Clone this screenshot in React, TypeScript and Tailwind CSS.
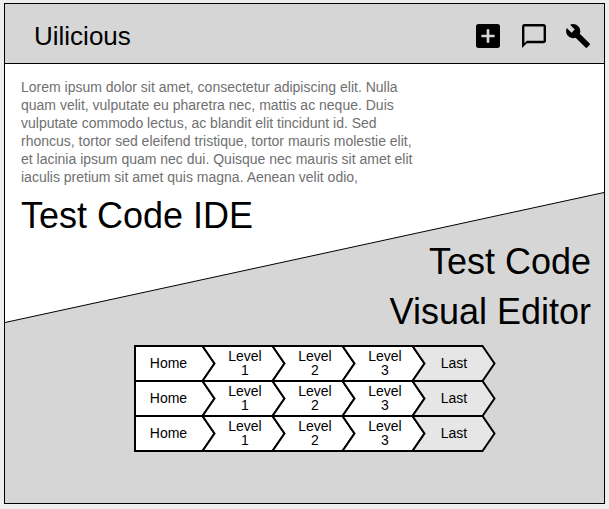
import React from "react";

const copy = [
  "Lorem ipsum dolor sit amet, consectetur adipiscing elit. Nulla",
  "quam velit, vulputate eu pharetra nec, mattis ac neque. Duis",
  "vulputate commodo lectus, ac blandit elit tincidunt id. Sed",
  "rhoncus, tortor sed eleifend tristique, tortor mauris molestie elit,",
  "et lacinia ipsum quam nec dui. Quisque nec mauris sit amet elit",
  "iaculis pretium sit amet quis magna. Aenean velit odio,",
];

function Header() {
  return (
    <header className="flex h-[60px] items-center justify-between border-b border-black pr-[14px] pl-[29px]">
      <h1 className="mt-[4px] text-[26px] leading-[30px]">Uilicious</h1>
      <div className="mt-[5px] flex items-center">
        <svg className="mr-[22px] size-6" viewBox="3 3 18 18" aria-label="Add">
          <path d="M19 3H5a2 2 0 0 0-2 2v14a2 2 0 0 0 2 2h14a2 2 0 0 0 2-2V5a2 2 0 0 0-2-2zm-2 10h-4v4h-2v-4H7v-2h4V7h2v4h4v2z" />
        </svg>
        <svg className="mr-5 size-6" viewBox="2 2 20 20" aria-label="Comment">
          <path d="M20 2H4c-1.1 0-2 .9-2 2v18l4-4h14c1.1 0 2-.9 2-2V4c0-1.1-.9-2-2-2zm0 14H6l-2 2V4h16v12z" />
        </svg>
        <svg className="size-6" viewBox="0.9 1 22.1 22.1" aria-label="Settings">
          <path d="M22.7 19l-9.1-9.1c.9-2.3.4-5-1.5-6.9-2-2-5-2.4-7.4-1.3L9 6 6 9 1.6 4.7C.4 7.1.9 10.1 2.9 12.1c1.9 1.9 4.6 2.4 6.9 1.5l9.1 9.1c.4.4 1 .4 1.4 0l2.3-2.3c.5-.4.5-1.1.1-1.4z" />
        </svg>
      </div>
    </header>
  );
}

function Step({ label, kind }: { label: React.ReactNode; kind: "first" | "middle" | "last" }) {
  const first = kind === "first";
  const d = first
    ? "M1 1H68.5L80.5 18.5L68.5 36H1Z"
    : "M-0.5 1H69.5L81.5 18.5L69.5 36H-0.5L11.5 18.5Z";
  const place = {
    first: "relative flex h-[35px] w-[69px] items-center justify-center text-center",
    middle: "relative ml-[7px] flex h-[35px] w-[70px] items-center justify-center text-center",
    last: "relative ml-[6px] flex h-[35px] w-[70px] items-center justify-center text-center",
  }[kind];
  return (
    <div className={first ? "relative w-[69px]" : "relative w-[70px]"}>
      <svg className="absolute top-0 left-0 h-[37px] w-[84px] overflow-visible" viewBox="0 0 84 37">
        <path d={d} fill={kind === "last" ? "#e6e6e6" : "#fff"} stroke="#000" strokeWidth="2" />
      </svg>
      <div className={place}>{label}</div>
    </div>
  );
}

function Breadcrumb() {
  return (
    <div className="flex h-[35px] flex-row text-[14px] leading-[14px]">
      <Step kind="first" label="Home" />
      {[1, 2, 3].map((n) => (
        <Step key={n} kind="middle" label={<span>Level<br />{n}</span>} />
      ))}
      <Step kind="last" label="Last" />
    </div>
  );
}

export default function App() {
  return (
    <div className="h-[509px] w-[609px] overflow-hidden bg-[#eeeeee] pt-[3px] pl-[4px] font-['Liberation_Sans',Arial,sans-serif] text-black">
      <div className="flex h-[501px] w-[601px] flex-col border border-black bg-[#d6d6d6]">
        <Header />
        <main className="relative flex-1">
          <svg className="absolute inset-0 h-[439px] w-[599px]" viewBox="0 0 599 439">
            <path d="M0 0H599V128.5L0 258.5Z" fill="#fff" />
            <path d="M0 258.5L599 128.5" stroke="#000" strokeWidth="1" />
          </svg>
          <div className="relative flex flex-col pt-[14px]">
            <p className="pl-4 text-[14px] leading-[18px] text-[#707070]">
              {copy.map((line) => (
                <span key={line} className="block whitespace-nowrap">{line}</span>
              ))}
            </p>
            <h2 className="mt-[9px] pl-4 text-[36px] leading-[42px]">Test Code IDE</h2>
            <h2 className="pr-[13px] text-right text-[36px] leading-[50px]">
              Test Code
              <br />
              Visual Editor
            </h2>
            <div className="mt-[8px] ml-[129px] flex flex-col">
              <Breadcrumb />
              <Breadcrumb />
              <Breadcrumb />
            </div>
          </div>
        </main>
      </div>
    </div>
  );
}
